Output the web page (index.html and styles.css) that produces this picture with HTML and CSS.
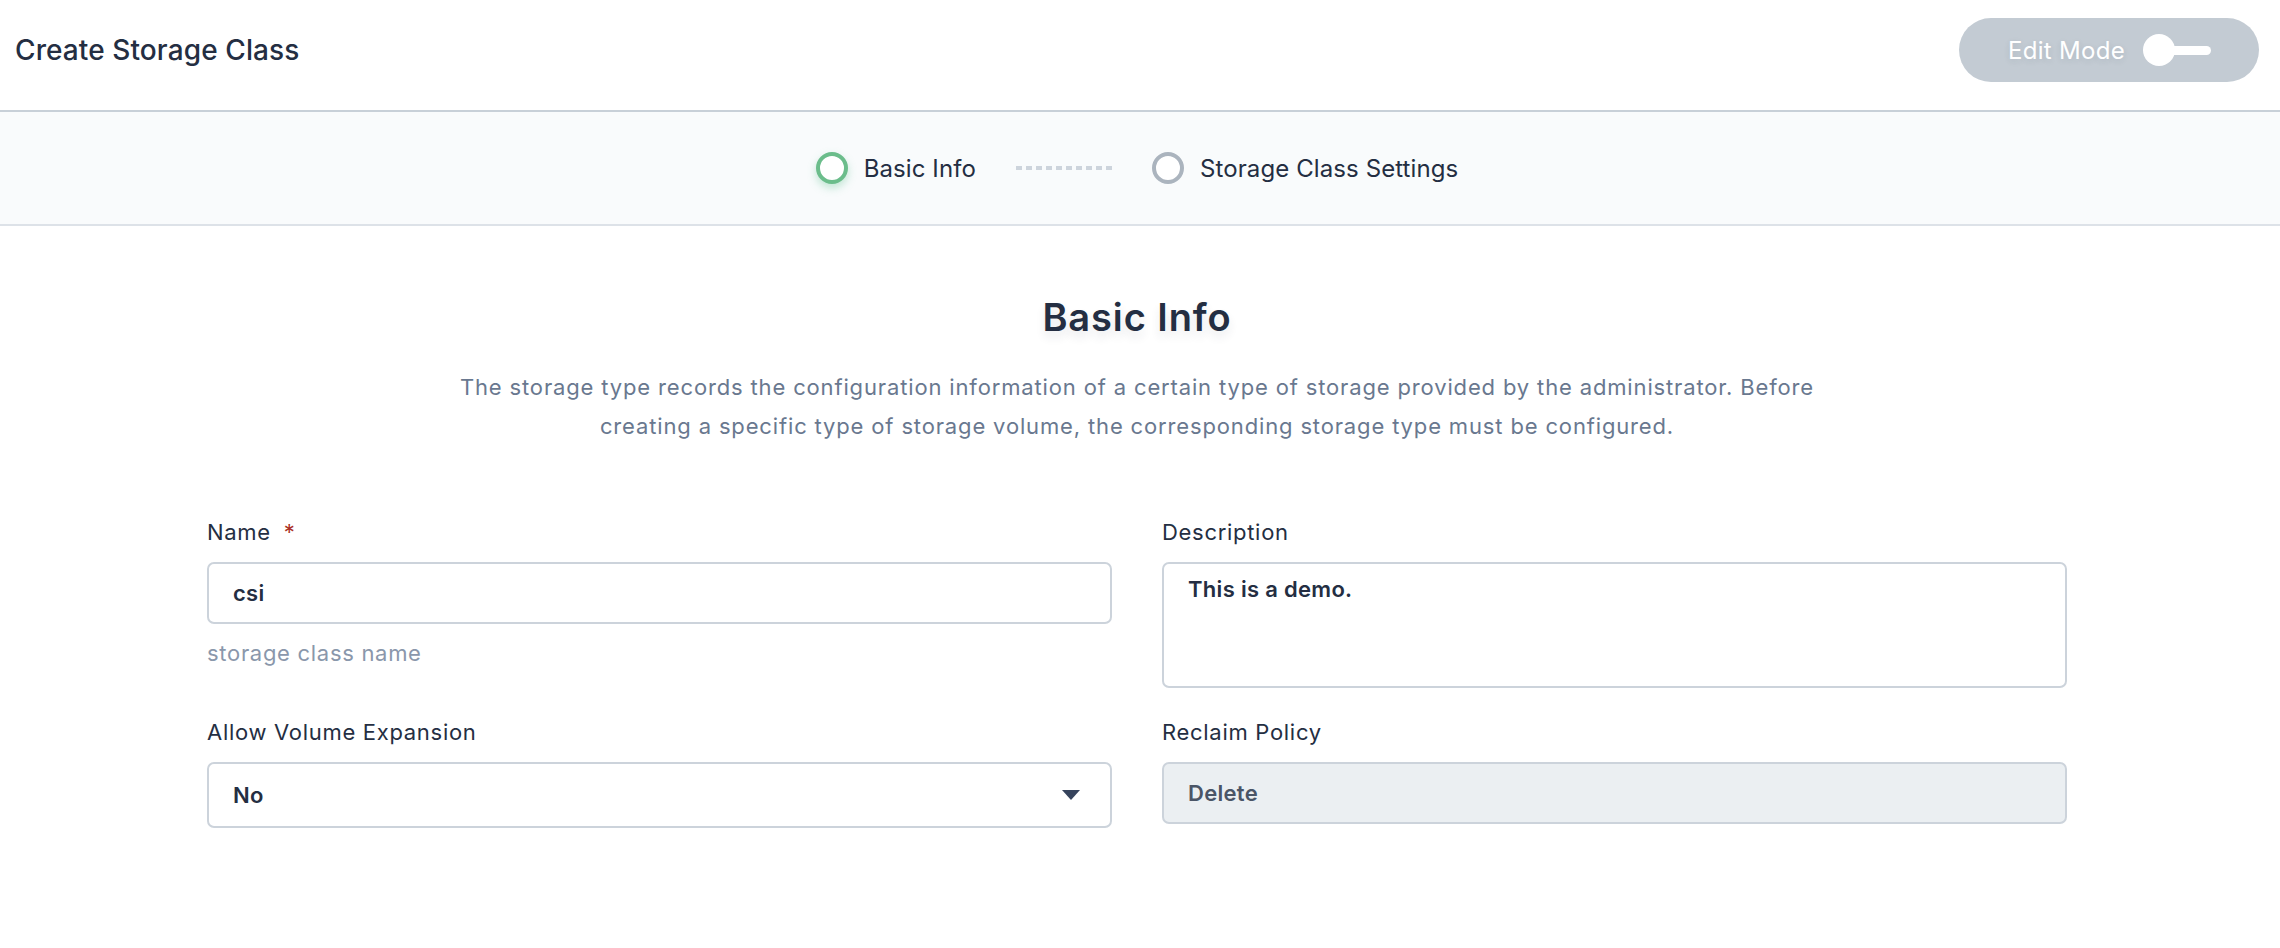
FILE: index.html
```html
<!DOCTYPE html>
<html lang="en">
<head>
<meta charset="utf-8">
<title>Create Storage Class</title>
<link rel="stylesheet" href="styles.css">
</head>
<body>
<header class="topbar">
  <h1 class="page-title">Create Storage Class</h1>
  <button class="edit-mode" type="button">
    <span class="edit-label">Edit Mode</span>
    <span class="toggle"><span class="toggle-knob"></span><span class="toggle-track"></span></span>
  </button>
</header>

<nav class="steps">
  <div class="step step-active">
    <span class="step-dot"></span>
    <span class="step-text">Basic Info</span>
  </div>
  <span class="step-line"></span>
  <div class="step">
    <span class="step-dot"></span>
    <span class="step-text">Storage Class Settings</span>
  </div>
</nav>

<main class="content">
  <h2 class="section-title">Basic Info</h2>
  <p class="section-desc">The storage type records the configuration information of a certain type of storage provided by the administrator. Before<br>creating a specific type of storage volume, the corresponding storage type must be configured.</p>

  <div class="form-grid">
    <div class="field">
      <label class="field-label">Name <span class="required">*</span></label>
      <div class="input">csi</div>
      <div class="field-help">storage class name</div>
    </div>
    <div class="field">
      <label class="field-label">Description</label>
      <div class="input textarea">This is a demo.</div>
    </div>
    <div class="field">
      <label class="field-label">Allow Volume Expansion</label>
      <div class="input select">
        <span>No</span>
        <svg class="caret" width="18" height="10" viewBox="0 0 18 10"><path d="M0 0 H18 L9 10 Z" fill="#36435c"/></svg>
      </div>
    </div>
    <div class="field">
      <label class="field-label">Reclaim Policy</label>
      <div class="input disabled">Delete</div>
    </div>
  </div>
</main>
</body>
</html>
```
FILE: styles.css
```css
* { box-sizing: border-box; }

html, body {
  margin: 0;
  padding: 0;
  background: #ffffff;
  font-family: Inter, "Noto Sans", "Liberation Sans", sans-serif;
  color: #242e42;
}

.topbar {
  height: 112px;
  display: flex;
  align-items: center;
  justify-content: space-between;
  padding: 0 21px 10px 15px;
  border-bottom: 2px solid #c8d0d8;
}

.page-title {
  margin: 0;
  font-size: 28px;
  font-weight: 500;
  letter-spacing: 0.1px;
  color: #242e42;
}

.edit-mode {
  width: 300px;
  height: 64px;
  border: none;
  border-radius: 32px;
  background: #c3cbd3;
  display: flex;
  align-items: center;
  padding: 0 0 0 49px;
  font-family: inherit;
  cursor: pointer;
}

.edit-label {
  color: #ffffff;
  font-size: 24px;
  font-weight: 400;
  letter-spacing: 0.3px;
  text-shadow: 0 2px 6px rgba(36, 46, 66, 0.12);
}

.toggle {
  display: flex;
  align-items: center;
  margin-left: 18px;
}

.toggle-knob {
  width: 32px;
  height: 32px;
  border-radius: 50%;
  background: #ffffff;
}

.toggle-track {
  width: 40px;
  height: 9px;
  margin-left: -4px;
  border-radius: 0 5px 5px 0;
  background: #ffffff;
}

.steps {
  height: 114px;
  background: #f9fbfc;
  border-bottom: 2px solid #dde2e8;
  display: flex;
  align-items: center;
  justify-content: center;
  padding: 0 6px 0 0;
}

.step {
  display: flex;
  align-items: center;
  gap: 16px;
}

.step-dot {
  width: 32px;
  height: 32px;
  border-radius: 50%;
  border: 4px solid #abb4be;
  background: #ffffff;
}

.step-active .step-dot {
  border-color: #6bbd8b;
  box-shadow: 0 4px 8px rgba(85, 188, 138, 0.35);
}

.step-text {
  font-size: 24px;
  letter-spacing: 0.1px;
  color: #242e42;
}

.step-line {
  width: 96px;
  height: 4px;
  margin: 0 40px;
  background: repeating-linear-gradient(90deg, #cdd4dc 0 6px, transparent 6px 10px);
}

.content {
  padding: 66px 6px 60px 0;
}

.section-title {
  margin: 0;
  text-align: center;
  font-size: 38px;
  font-weight: 600;
  letter-spacing: 0.9px;
  line-height: 50px;
  color: #242e42;
  text-shadow: 0 6px 10px rgba(36, 46, 66, 0.1);
}

.section-desc {
  margin: 26px 0 0;
  text-align: center;
  font-size: 22px;
  letter-spacing: 0.85px;
  line-height: 39px;
  color: #69788f;
}

.form-grid {
  width: 1860px;
  margin: 71px auto 0;
  display: grid;
  grid-template-columns: 905px 905px;
  column-gap: 50px;
  row-gap: 29px;
  align-items: start;
}

.field {
  display: flex;
  flex-direction: column;
}

.field-label {
  font-size: 22px;
  letter-spacing: 0.7px;
  line-height: 30px;
  color: #242e42;
  margin-bottom: 15px;
}

.required {
  color: #ab2f24;
  margin-left: 6px;
}

.input {
  height: 62px;
  border: 2px solid #ccd3db;
  border-radius: 7px;
  background: #ffffff;
  padding: 0 24px;
  display: flex;
  align-items: center;
  font-size: 22px;
  font-weight: 600;
  letter-spacing: 0.3px;
  color: #242e42;
}

.textarea {
  height: 126px;
  align-items: flex-start;
  padding-top: 10px;
  line-height: 30px;
}

.select {
  height: 66px;
  justify-content: space-between;
  padding-right: 30px;
}

.disabled {
  background: #ebeff2;
  color: #4a5567;
}

.field-help {
  margin-top: 14px;
  font-size: 22px;
  letter-spacing: 0.7px;
  line-height: 30px;
  color: #8a97ab;
}
```
